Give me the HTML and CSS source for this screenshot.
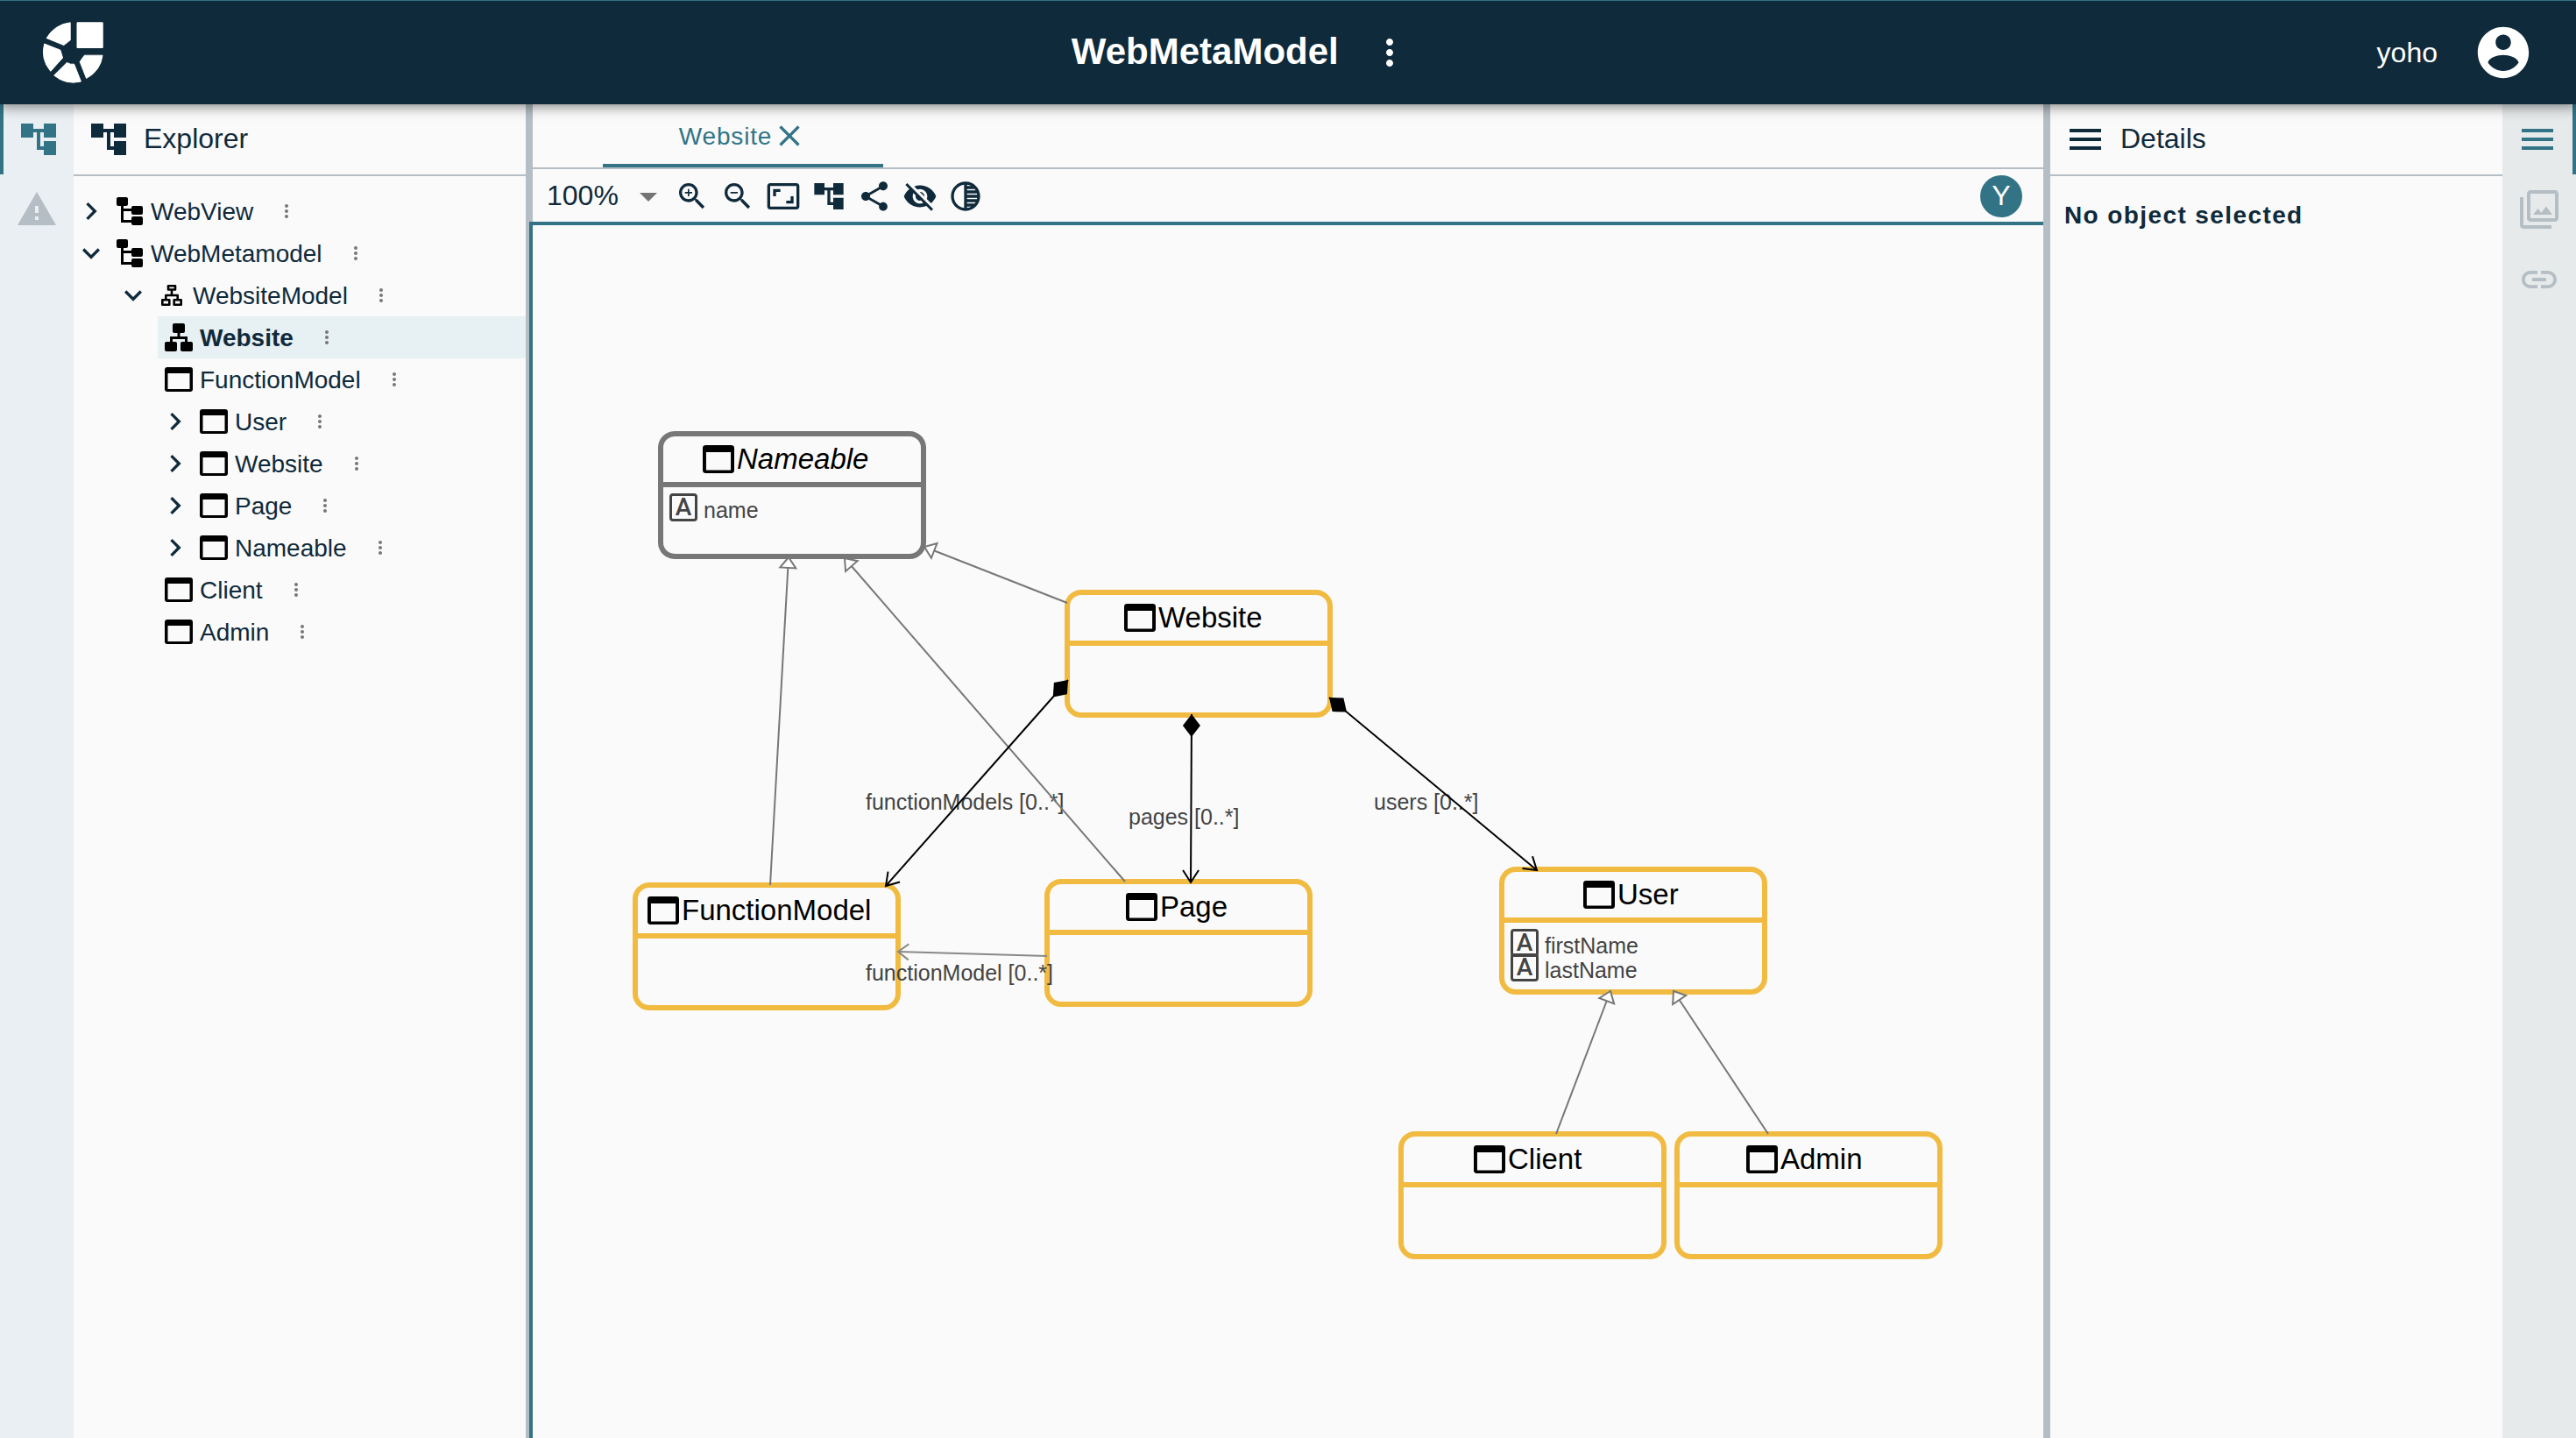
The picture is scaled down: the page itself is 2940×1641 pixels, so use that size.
FILE: index.html
```html
<!DOCTYPE html>
<html lang="en">
<head>
<meta charset="utf-8">
<title>WebMetaModel</title>
<link rel="stylesheet" href="styles.css">
</head>
<body>
<svg class="sprite" aria-hidden="true">
  <symbol id="i-tree" viewBox="0 0 24 24"><path d="M22 11V3h-7v3H9V3H2v8h7V8h2v10h4v3h7v-8h-7v3h-2V8h2v3z"/></symbol>
  <symbol id="i-warning" viewBox="0 0 24 24"><path d="M1 21h22L12 2 1 21zm12-3h-2v-2h2v2zm0-4h-2v-4h2v4z"/></symbol>
  <symbol id="i-menu" viewBox="0 0 24 24"><path d="M3 18h18v-2H3v2zm0-5h18v-2H3v2zm0-7v2h18V6H3z"/></symbol>
  <symbol id="i-images" viewBox="0 0 24 24"><path d="M15.96 10.29l-2.75 3.54-1.96-2.36L8.5 15h11l-3.54-4.71zM3 5H1v16c0 1.1.9 2 2 2h16v-2H3V5zm18-4H7c-1.1 0-2 .9-2 2v14c0 1.1.9 2 2 2h14c1.1 0 2-.9 2-2V3c0-1.1-.9-2-2-2zm0 16H7V3h14v14z"/></symbol>
  <symbol id="i-link" viewBox="0 0 24 24"><path d="M3.9 12c0-1.71 1.39-3.1 3.1-3.1h4V7H7c-2.76 0-5 2.24-5 5s2.24 5 5 5h4v-1.9H7c-1.71 0-3.1-1.39-3.1-3.1zM8 13h8v-2H8v2zm9-6h-4v1.9h4c1.71 0 3.1 1.39 3.1 3.1s-1.39 3.1-3.1 3.1h-4V17h4c2.76 0 5-2.24 5-5s-2.24-5-5-5z"/></symbol>
  <symbol id="i-more" viewBox="0 0 24 24"><path d="M12 8c1.1 0 2-.9 2-2s-.9-2-2-2-2 .9-2 2 .9 2 2 2zm0 2c-1.1 0-2 .9-2 2s.9 2 2 2 2-.9 2-2-.9-2-2-2zm0 6c-1.1 0-2 .9-2 2s.9 2 2 2 2-.9 2-2-.9-2-2-2z"/></symbol>
  <symbol id="i-account" viewBox="0 0 24 24"><path d="M12 2C6.48 2 2 6.48 2 12s4.480 10 10 10 10-4.480 10-10S17.520 2 12 2zm0 3c1.660 0 3 1.340 3 3s-1.340 3-3 3-3-1.340-3-3 1.340-3 3-3zm0 14.200c-2.500 0-4.710-1.280-6-3.220.03-1.990 4-3.080 6-3.080 1.990 0 5.970 1.090 6 3.080-1.290 1.940-3.500 3.220-6 3.220z"/></symbol>
  <symbol id="i-close" viewBox="0 0 24 24"><path d="M19 6.410L17.590 5 12 10.590 6.410 5 5 6.410 10.590 12 5 17.590 6.410 19 12 13.410 17.590 19 19 17.590 13.410 12z"/></symbol>
  <symbol id="i-right" viewBox="0 0 24 24"><path d="M10 6L8.590 7.410 13.170 12l-4.580 4.590L10 18l6-6z"/></symbol>
  <symbol id="i-down" viewBox="0 0 24 24"><path d="M16.590 8.590L12 13.170 7.410 8.590 6 10l6 6 6-6z"/></symbol>
  <symbol id="i-drop" viewBox="0 0 24 24"><path d="M7 10l5 5 5-5z"/></symbol>
  <symbol id="i-zoomin" viewBox="0 0 24 24"><path d="M15.500 14h-.79l-.28-.27C15.410 12.590 16 11.110 16 9.500 16 5.910 13.090 3 9.500 3S3 5.910 3 9.500 5.910 16 9.500 16c1.610 0 3.090-.59 4.230-1.570l.27.28v.79l5 4.990L20.490 19l-4.990-5zm-6 0C7.010 14 5 11.990 5 9.500S7.010 5 9.500 5 14 7.010 14 9.500 11.990 14 9.500 14zm.5-7H9v2H7v1h2v2h1v-2h2V9h-2z"/></symbol>
  <symbol id="i-zoomout" viewBox="0 0 24 24"><path d="M15.500 14h-.79l-.28-.27C15.410 12.590 16 11.110 16 9.500 16 5.910 13.090 3 9.500 3S3 5.910 3 9.500 5.910 16 9.500 16c1.610 0 3.090-.59 4.230-1.570l.27.28v.79l5 4.990L20.490 19l-4.990-5zm-6 0C7.010 14 5 11.990 5 9.500S7.010 5 9.500 5 14 7.010 14 9.500 11.990 14 9.500 14zM7 9h5v1H7z"/></symbol>
  <symbol id="i-fit" viewBox="0 0 24 24"><path d="M19 12h-2v3h-3v2h5v-5zM7 9h3V7H5v5h2V9zm14-6H3c-1.100 0-2 .9-2 2v14c0 1.100.9 2 2 2h18c1.100 0 2-.9 2-2V5c0-1.100-.9-2-2-2zm0 16.010H3V4.990h18v14.020z"/></symbol>
  <symbol id="i-share" viewBox="0 0 24 24"><path d="M18 16.080c-.76 0-1.440.3-1.960.77L8.910 12.700c.05-.23.09-.46.09-.7s-.04-.47-.09-.7l7.050-4.110c.54.5 1.250.81 2.040.81 1.660 0 3-1.340 3-3s-1.340-3-3-3-3 1.340-3 3c0 .24.040.47.090.7L8.040 9.810C7.500 9.310 6.790 9 6 9c-1.660 0-3 1.340-3 3s1.340 3 3 3c.79 0 1.500-.31 2.040-.81l7.120 4.160c-.05.21-.08.43-.08.65 0 1.610 1.310 2.920 2.920 2.920 1.610 0 2.920-1.310 2.920-2.920s-1.310-2.920-2.920-2.920z"/></symbol>
  <symbol id="i-hide" viewBox="0 0 24 24"><path d="M12 7c2.760 0 5 2.240 5 5 0 .65-.13 1.260-.36 1.830l2.920 2.920c1.510-1.260 2.700-2.890 3.430-4.750-1.730-4.390-6-7.500-11-7.500-1.400 0-2.740.25-3.980.7l2.160 2.160C10.740 7.130 11.350 7 12 7zM2 4.270l2.280 2.280.46.46C3.080 8.300 1.780 10.020 1 12c1.730 4.390 6 7.500 11 7.500 1.550 0 3.030-.3 4.380-.84l.42.42L19.730 22 21 20.730 3.270 3 2 4.270zM7.530 9.800l1.550 1.550c-.05.21-.08.43-.08.65 0 1.660 1.340 3 3 3 .22 0 .44-.03.65-.08l1.550 1.550c-.67.33-1.410.53-2.200.53-2.760 0-5-2.240-5-5 0-.79.2-1.530.53-2.200zm4.310-.78l3.150 3.150.02-.16c0-1.660-1.340-3-3-3l-.17.01z"/></symbol>
  <symbol id="i-fade" viewBox="0 0 24 24"><path d="M12 2C6.480 2 2 6.480 2 12s4.480 10 10 10 10-4.480 10-10S17.520 2 12 2zm-1 17.930c-3.940-.49-7-3.850-7-7.930s3.050-7.440 7-7.930v15.860zm2-15.860c1.030.13 2 .45 2.870.93H13v-.93zM13 7h5.240c.25.310.48.650.68 1H13V7zm0 3h6.740c.08.330.15.660.19 1H13v-1zm0 9.930V19h2.870c-.87.480-1.840.8-2.870.93zM18.240 17H13v-1h5.920c-.2.350-.43.690-.68 1zm1.500-3H13v-1h6.930c-.04.340-.11.670-.19 1z"/></symbol>
  <symbol id="i-project" viewBox="0 0 32 32"><rect x="1" width="13" height="10" rx="2"/><rect x="18" y="10" width="13" height="10" rx="2"/><rect x="18" y="22" width="13" height="10" rx="2"/><path d="M7.500 8v19.500H20M7.500 14.500H20" fill="none" stroke="currentColor" stroke-width="3"/></symbol>
  <symbol id="i-model" viewBox="0 0 32 32"><path d="M12 5.300h8v4.200h-8zM5.300 21.300h8v5.400h-8zM18.700 21.300h8v5.400h-8zM16 9.500v6.500M9.300 21.300V16h13.400v5.300" fill="none" stroke="currentColor" stroke-width="2.600" stroke-linejoin="round"/></symbol>
  <symbol id="i-diagram" viewBox="0 0 32 32"><rect x="9" width="14" height="11" rx="2"/><rect y="21" width="14" height="11" rx="2"/><rect x="18" y="21" width="14" height="11" rx="2"/><path d="M16 10v7M7.500 22v-5.500h17V22" fill="none" stroke="currentColor" stroke-width="3"/></symbol>
  <symbol id="i-window" viewBox="0 0 32 28" preserveAspectRatio="none"><path fill-rule="evenodd" d="M3 0h26a3 3 0 0 1 3 3v22a3 3 0 0 1-3 3H3a3 3 0 0 1-3-3V3a3 3 0 0 1 3-3zm.5 7v18h25V7z"/></symbol>
</svg>

<header class="appbar">
  <a class="logo" href="#" aria-label="Home">
    <svg width="70" height="70" viewBox="0 0 70 70" fill="currentColor" stroke="currentColor" stroke-width="1" stroke-linejoin="round"><path d="M40 .8h29.200v28.700H40zM32.200.8V20.800L24.800 26.500 5.200 18.500A35 35 0 0 1 32.200.8zM2.600 25l18.300 7.200L23.500 41 9.800 56.300A35 35 0 0 1 2.600 25zM28.300 46.500l4.300 1.700h4L44.400 68A35 35 0 0 1 13.700 61zM48.300 38.200H69A35 35 0 0 1 50.600 64.400L43.200 45.500z"/></svg>
  </a>
  <div class="appbar-title">
    <h1>WebMetaModel</h1>
    <button class="appbar-more" aria-label="More"><svg class="icon-48"><use href="#i-more"/></svg></button>
  </div>
  <a class="user" href="#">yoho <svg class="icon-70"><use href="#i-account"/></svg></a>
</header>

<div class="workbench">
  <nav class="rail rail-left" aria-label="Left views">
    <button class="rail-item active" aria-label="Explorer"><svg class="icon-48"><use href="#i-tree"/></svg></button>
    <button class="rail-item" aria-label="Validation"><svg class="icon-48"><use href="#i-warning"/></svg></button>
  </nav>

  <aside class="panel explorer">
    <h2 class="panel-head"><svg class="icon-48"><use href="#i-tree"/></svg><span>Explorer</span></h2>
    <ul class="tree">
      <li class="row"><button class="toggle" aria-label="Expand"><svg class="icon-40"><use href="#i-right"/></svg></button><svg class="item-icon"><use href="#i-project"/></svg><span>WebView</span><button class="more" aria-label="More"><svg class="icon-24"><use href="#i-more"/></svg></button></li>
      <li class="row"><button class="toggle" aria-label="Collapse"><svg class="icon-40"><use href="#i-down"/></svg></button><svg class="item-icon"><use href="#i-project"/></svg><span>WebMetamodel</span><button class="more" aria-label="More"><svg class="icon-24"><use href="#i-more"/></svg></button></li>
      <li class="row level-1"><button class="toggle" aria-label="Collapse"><svg class="icon-40"><use href="#i-down"/></svg></button><svg class="item-icon"><use href="#i-model"/></svg><span>WebsiteModel</span><button class="more" aria-label="More"><svg class="icon-24"><use href="#i-more"/></svg></button></li>
      <li class="row leaf selected"><svg class="item-icon"><use href="#i-diagram"/></svg><span>Website</span><button class="more" aria-label="More"><svg class="icon-24"><use href="#i-more"/></svg></button></li>
      <li class="row leaf"><svg class="item-icon window"><use href="#i-window"/></svg><span>FunctionModel</span><button class="more" aria-label="More"><svg class="icon-24"><use href="#i-more"/></svg></button></li>
      <li class="row level-2"><button class="toggle" aria-label="Expand"><svg class="icon-40"><use href="#i-right"/></svg></button><svg class="item-icon window"><use href="#i-window"/></svg><span>User</span><button class="more" aria-label="More"><svg class="icon-24"><use href="#i-more"/></svg></button></li>
      <li class="row level-2"><button class="toggle" aria-label="Expand"><svg class="icon-40"><use href="#i-right"/></svg></button><svg class="item-icon window"><use href="#i-window"/></svg><span>Website</span><button class="more" aria-label="More"><svg class="icon-24"><use href="#i-more"/></svg></button></li>
      <li class="row level-2"><button class="toggle" aria-label="Expand"><svg class="icon-40"><use href="#i-right"/></svg></button><svg class="item-icon window"><use href="#i-window"/></svg><span>Page</span><button class="more" aria-label="More"><svg class="icon-24"><use href="#i-more"/></svg></button></li>
      <li class="row level-2"><button class="toggle" aria-label="Expand"><svg class="icon-40"><use href="#i-right"/></svg></button><svg class="item-icon window"><use href="#i-window"/></svg><span>Nameable</span><button class="more" aria-label="More"><svg class="icon-24"><use href="#i-more"/></svg></button></li>
      <li class="row leaf"><svg class="item-icon window"><use href="#i-window"/></svg><span>Client</span><button class="more" aria-label="More"><svg class="icon-24"><use href="#i-more"/></svg></button></li>
      <li class="row leaf"><svg class="item-icon window"><use href="#i-window"/></svg><span>Admin</span><button class="more" aria-label="More"><svg class="icon-24"><use href="#i-more"/></svg></button></li>
    </ul>
  </aside>

  <main class="editor">
    <div class="tabs" role="tablist">
      <div class="tab" role="tab" aria-selected="true"><span>Website</span><button class="tool" aria-label="Close"><svg class="icon-40"><use href="#i-close"/></svg></button></div>
    </div>
    <div class="toolbar">
      <div class="zoom">
        <select aria-label="Zoom level"><option>100%</option><option>75%</option><option>50%</option></select>
        <svg class="icon-48"><use href="#i-drop"/></svg>
      </div>
      <div class="tools">
        <button class="tool" aria-label="Zoom in"><svg class="icon-40"><use href="#i-zoomin"/></svg></button>
        <button class="tool" aria-label="Zoom out"><svg class="icon-40"><use href="#i-zoomout"/></svg></button>
        <button class="tool" aria-label="Fit to screen"><svg class="icon-40"><use href="#i-fit"/></svg></button>
        <button class="tool" aria-label="Arrange all"><svg class="icon-40"><use href="#i-tree"/></svg></button>
        <button class="tool" aria-label="Share"><svg class="icon-40"><use href="#i-share"/></svg></button>
        <button class="tool" aria-label="Reveal hidden"><svg class="icon-40"><use href="#i-hide"/></svg></button>
        <button class="tool" aria-label="Unfade"><svg class="icon-40"><use href="#i-fade"/></svg></button>
      </div>
      <span class="avatar">Y</span>
    </div>
    <div class="canvas">
      <section class="node abstract" style="left:143px;top:235px;--label-x:45px">
        <h3><svg class="node-icon"><use href="#i-window"/></svg>Nameable</h3>
        <ul><li><span class="attr">A</span><span>name</span></li></ul>
      </section>
      <section class="node" style="left:607px;top:416px;--label-x:62px"><h3><svg class="node-icon"><use href="#i-window"/></svg>Website</h3></section>
      <section class="node" style="left:114px;top:750px;--label-x:11px"><h3><svg class="node-icon"><use href="#i-window"/></svg>FunctionModel</h3></section>
      <section class="node" style="left:584px;top:746px;--label-x:87px"><h3><svg class="node-icon"><use href="#i-window"/></svg>Page</h3></section>
      <section class="node" style="left:1103px;top:732px;--label-x:90px">
        <h3><svg class="node-icon"><use href="#i-window"/></svg>User</h3>
        <ul><li><span class="attr">A</span><span>firstName</span></li><li><span class="attr">A</span><span>lastName</span></li></ul>
      </section>
      <section class="node" style="left:988px;top:1034px;--label-x:80px"><h3><svg class="node-icon"><use href="#i-window"/></svg>Client</h3></section>
      <section class="node" style="left:1303px;top:1034px;--label-x:76px"><h3><svg class="node-icon"><use href="#i-window"/></svg>Admin</h3></section>

      <svg class="edges">
        <defs>
          <marker id="m-triangle" markerUnits="userSpaceOnUse" markerWidth="18" markerHeight="26" refX="14" refY="13" orient="auto"><path d="M2 4l12 9-12 9z" fill="#fff" stroke="#777" stroke-width="2"/></marker>
          <marker id="m-diamond" markerUnits="userSpaceOnUse" markerWidth="28" markerHeight="22" refX="0" refY="11" orient="auto"><path d="M0 11L13 1l13 10-13 10z" fill="#000"/></marker>
          <marker id="m-arrow" markerUnits="userSpaceOnUse" markerWidth="20" markerHeight="24" refX="16" refY="12" orient="auto"><path d="M2 3l14 9-14 9" fill="none" stroke="#000" stroke-width="2"/></marker>
          <marker id="m-arrow-gray" markerUnits="userSpaceOnUse" markerWidth="20" markerHeight="24" refX="16" refY="12" orient="auto"><path d="M4 3l12 9-12 9" fill="none" stroke="#888" stroke-width="2"/></marker>
        </defs>
        <g class="edge-label">
          <text x="380" y="667">functionModels [0..*]</text>
          <text x="680" y="684">pages [0..*]</text>
          <text x="960" y="667">users [0..*]</text>
          <text x="380" y="862">functionModel [0..*]</text>
        </g>
        <g stroke="#777" stroke-width="2">
          <path d="M271 753L292 379" marker-end="url(#m-triangle)"/>
          <path d="M676 749L356 380" marker-end="url(#m-triangle)"/>
          <path d="M610 431L447 367" marker-end="url(#m-triangle)"/>
          <path d="M1168 1037L1230 874" marker-end="url(#m-triangle)"/>
          <path d="M1410 1037L1302 874" marker-end="url(#m-triangle)"/>
          <path d="M587 834L417 829" stroke="#888" marker-end="url(#m-arrow-gray)"/>
        </g>
        <g stroke="#000" stroke-width="2">
          <path d="M611 519L403 754" marker-start="url(#m-diamond)" marker-end="url(#m-arrow)"/>
          <path d="M752 558L751 750" marker-start="url(#m-diamond)" marker-end="url(#m-arrow)"/>
          <path d="M909 539L1146 736" marker-start="url(#m-diamond)" marker-end="url(#m-arrow)"/>
        </g>
      </svg>
    </div>
  </main>

  <aside class="panel details">
    <h2 class="panel-head"><svg class="icon-48"><use href="#i-menu"/></svg><span>Details</span></h2>
    <p class="empty">No object selected</p>
  </aside>

  <nav class="rail rail-right" aria-label="Right views">
    <button class="rail-item active" aria-label="Details"><svg class="icon-48"><use href="#i-menu"/></svg></button>
    <button class="rail-item" aria-label="Representations"><svg class="icon-48"><use href="#i-images"/></svg></button>
    <button class="rail-item" aria-label="Related elements"><svg class="icon-48"><use href="#i-link"/></svg></button>
  </nav>
</div>
</body>
</html>
```
FILE: styles.css
```css
:root {
  --ink: #0f2a3b;
  --accent: #327486;
  --line: #b4bec4;
  --paper: #fafafa;
  --gold: #f1bb41;
}

* { box-sizing: border-box; }

body {
  margin: 0;
  min-height: 100vh;
  display: flex;
  flex-direction: column;
  background: var(--paper);
  color: var(--ink);
  font: 28px/32px "Liberation Sans", Arial, sans-serif;
}

h1, h2, h3, p, ul { margin: 0; padding: 0; }
ul { list-style: none; }
svg { display: block; flex: none; fill: currentColor; }
a { color: inherit; text-decoration: none; }

button {
  display: flex;
  align-items: center;
  justify-content: center;
  flex: none;
  padding: 0;
  border: 0;
  background: none;
  color: inherit;
  font: inherit;
}

.sprite { position: absolute; width: 0; height: 0; }
.icon-24 { width: 24px; height: 24px; }
.icon-40 { width: 40px; height: 40px; }
.icon-48 { width: 48px; height: 48px; }
.icon-70 { width: 70px; height: 70px; }

/* Application bar */
.appbar {
  position: relative;
  z-index: 2;
  display: flex;
  align-items: center;
  justify-content: space-between;
  height: 119px;
  padding: 0 48px;
  border-top: 1px solid var(--accent);
  background: var(--ink);
  color: #fff;
  box-shadow: 0 4px 8px -2px rgba(0, 0, 0, .2), 0 8px 10px rgba(0, 0, 0, .14), 0 2px 20px rgba(0, 0, 0, .12);
}
.logo { padding-right: 14px; }
.appbar-title { display: flex; align-items: center; gap: 22px; }
.appbar-title h1 { padding-bottom: 2px; font-size: 42px; line-height: 48px; }
.appbar-more { width: 72px; height: 72px; }
.user { display: flex; align-items: center; gap: 40px; font-size: 32px; line-height: 40px; }

/* Workbench */
.workbench { flex: 1; display: flex; }

.rail { flex: none; width: 84px; color: var(--line); }
.rail-left { background: #e9eff2; }
.rail-right { background: #e6eaeb; }
.rail-item { width: 100%; height: 80px; }
.rail-item.active { color: var(--accent); }
.rail-left .active { border-left: 4px solid var(--accent); }
.rail-right .active { border-right: 4px solid var(--accent); }

.panel { flex: none; width: 516px; }
.panel-head {
  display: flex;
  align-items: center;
  gap: 16px;
  height: 82px;
  padding: 0 16px;
  border-bottom: 2px solid var(--line);
  font-size: 32px;
  font-weight: 400;
}
.panel-head span { padding-bottom: 2px; }
.details { width: 524px; border-left: 8px solid var(--line); }
.empty { padding: 29px 16px; font-weight: 700; letter-spacing: 0.05em; }

/* Explorer tree */
.tree { padding-top: 16px; }
.row { display: flex; align-items: center; height: 48px; padding-left: 4px; }
.row span { padding-top: 2px; }
.level-1 { padding-left: 52px; }
.level-2 { padding-left: 100px; }
.leaf { margin-left: 96px; padding-left: 8px; }
.selected { background: #e7f0f3; font-weight: 700; }
.toggle { width: 32px; height: 32px; margin-right: 12px; }
.item-icon { width: 32px; height: 32px; margin-right: 8px; color: #000; }
.item-icon.window { height: 28px; }
.more { width: 32px; height: 32px; margin-left: 22px; color: #777; }

/* Editor */
.editor { flex: 1; min-width: 0; display: flex; flex-direction: column; border-left: 4px solid var(--line); }
.tabs {
  display: flex;
  height: 74px;
  padding-left: 80px;
  border-left: 4px solid var(--line);
  border-bottom: 2px solid var(--line);
}
.tab {
  display: flex;
  align-items: center;
  justify-content: center;
  width: 320px;
  padding-top: 4px;
  border-bottom: 4px solid var(--accent);
  color: var(--accent);
  letter-spacing: 0.03em;
}
.tab span { padding-top: 2px; }
.toolbar {
  display: flex;
  align-items: center;
  height: 60px;
  padding: 2px 24px 0 16px;
  border-left: 4px solid var(--line);
}
.zoom { display: grid; width: 140px; margin-right: 6px; align-items: center; }
.zoom select, .zoom svg { grid-area: 1 / 1; }
.zoom svg { justify-self: end; color: #757575; pointer-events: none; }
.zoom select {
  appearance: none;
  height: 40px;
  padding: 0 0 2px;
  border: 0;
  background: none;
  color: inherit;
  font: 32px/36px "Liberation Sans", Arial, sans-serif;
}
.tools { display: flex; gap: 12px; }
.tool { width: 40px; height: 40px; }
.avatar {
  width: 48px;
  height: 48px;
  margin-left: auto;
  border-radius: 50%;
  background: var(--accent);
  color: #fff;
  font-size: 32px;
  line-height: 46px;
  text-align: center;
}

/* Diagram */
.canvas {
  position: relative;
  flex: 1;
  min-height: 1200px;
  overflow: hidden;
  border-left: 4px solid var(--accent);
  border-top: 4px solid var(--accent);
}
.node {
  --stroke: var(--gold);
  position: absolute;
  width: 306px;
  height: 146px;
  border: 6px solid var(--stroke);
  border-radius: 19px;
  color: #000;
}
.node.abstract { --stroke: #777; }
.node.abstract h3 { font-style: italic; }
.node h3 {
  display: flex;
  align-items: center;
  gap: 3px;
  height: 58px;
  padding-left: var(--label-x);
  border-bottom: 6px solid var(--stroke);
  font-size: 33px;
  font-weight: 400;
  line-height: 36px;
}
.node-icon { width: 36px; height: 32px; }
.node ul { padding: 7px 7px 0; color: #444; font-size: 25px; line-height: 28px; }
.node li { display: flex; gap: 7px; height: 28px; }
.node li span + span { padding-top: 5px; }
.attr {
  flex: none;
  width: 32px;
  height: 32px;
  border: 3px solid #444;
  border-radius: 4px;
  font: 500 28px/26px Roboto, sans-serif;
  text-align: center;
}
.edges { position: absolute; inset: 0; width: 100%; height: 100%; pointer-events: none; }
.edge-label { fill: #444; font-size: 25px; }
```
